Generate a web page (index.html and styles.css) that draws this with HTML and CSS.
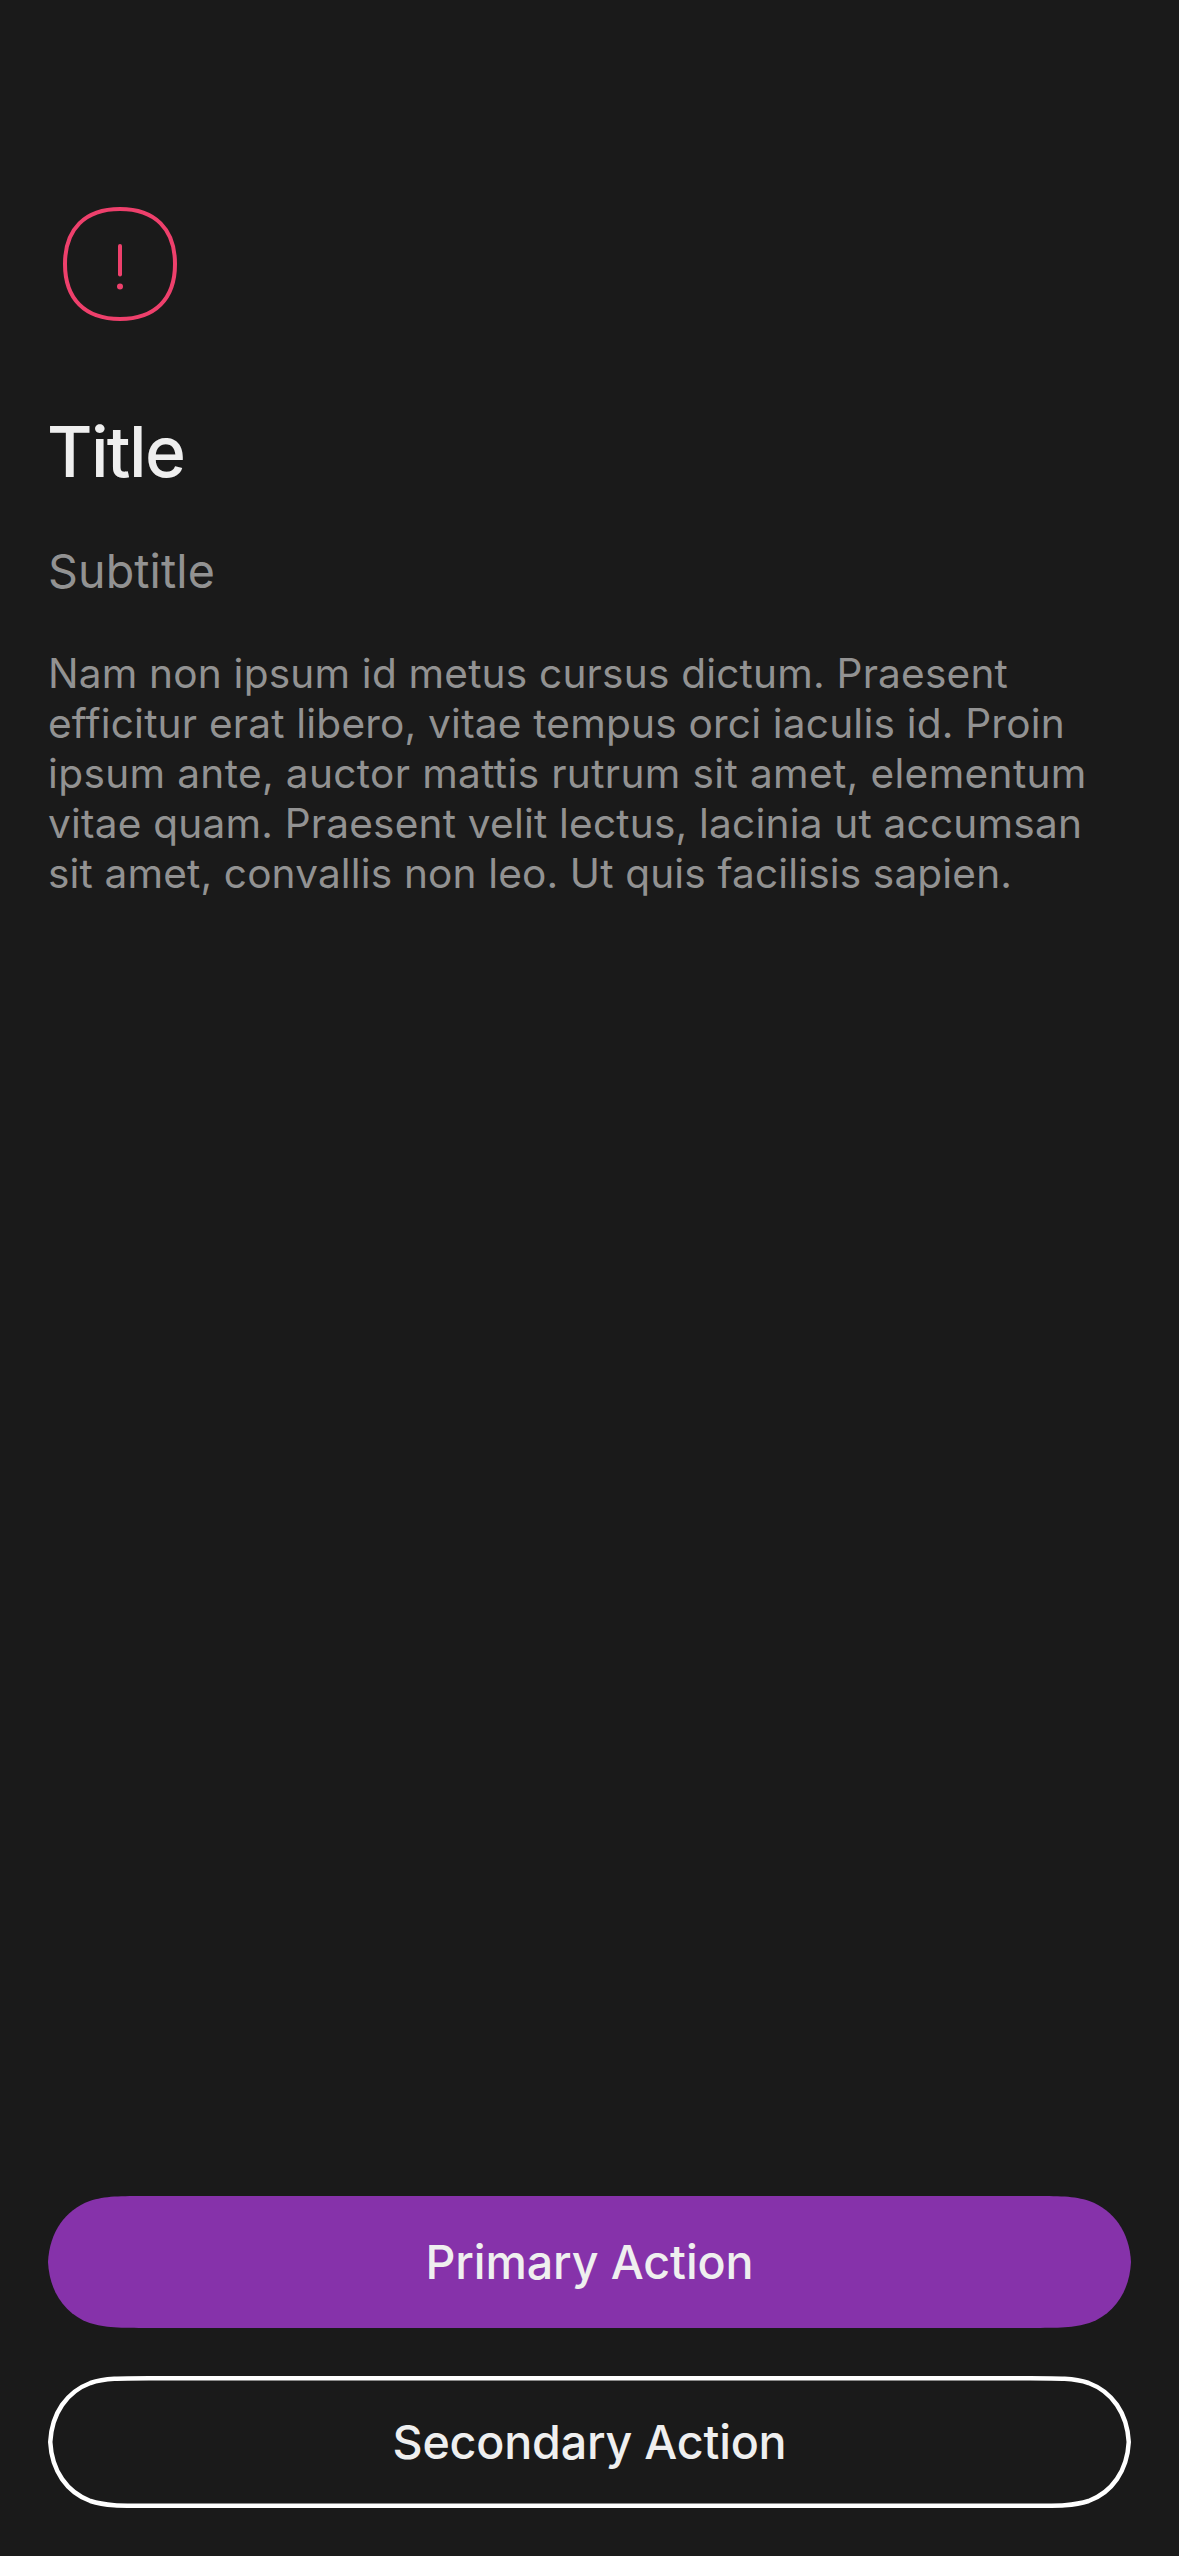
FILE: index.html
```html
<!DOCTYPE html>
<html lang="en">
<head>
<meta charset="utf-8">
<meta name="viewport" content="width=device-width">
<title>Title</title>
<link rel="stylesheet" href="styles.css">
</head>
<body>
<main class="screen">
  <section class="content">
    <svg class="icon" viewBox="0 0 144 144" aria-hidden="true">
      <path class="icon-line" d="M72 17C107 17 127 37 127 72C127 107 107 127 72 127C37 127 17 107 17 72C17 37 37 17 72 17Z"/>
      <path class="icon-line" d="M72 54V82.5"/>
      <circle class="icon-dot" cx="72" cy="94.5" r="3"/>
    </svg>
    <h1 class="title">Title</h1>
    <h2 class="subtitle">Subtitle</h2>
    <p class="text">
      <span>Nam non ipsum id metus cursus dictum. Praesent</span>
      <span>efficitur erat libero, vitae tempus orci iaculis id. Proin</span>
      <span class="loose">ipsum ante, auctor mattis rutrum sit amet, elementum</span>
      <span>vitae quam. Praesent velit lectus, lacinia ut accumsan</span>
      <span class="tight">sit amet, convallis non leo. Ut quis facilisis sapien.</span>
    </p>
  </section>
  <footer class="actions">
    <button class="button" type="button">
      <svg class="shape primary" viewBox="0 0 1083 132" aria-hidden="true"><path d="M100.9 0H982.1C1011 0 1026 0 1041.3 4.9C1066 14 1081.5 36 1083 66C1081.5 96 1066 118 1041.3 127.1C1026 132 1011 132 982.1 132H100.9C72 132 57 132 41.7 127.1C17 118 1.5 96 0 66C1.5 36 17 14 41.7 4.9C57 0 72 0 100.9 0Z"/></svg>
      <span class="label">Primary Action</span>
    </button>
    <button class="button" type="button">
      <svg class="shape secondary" viewBox="0 0 1083 132" aria-hidden="true"><path d="M100.9 2.25H982.1C1011 2.25 1026 2.25 1040.6 7C1064 15.7 1079.25 37 1080.75 66C1079.25 95 1064 116.3 1040.6 125C1026 129.75 1011 129.75 982.1 129.75H100.9C72 129.75 57 129.75 42.4 125C19 116.3 3.75 95 2.25 66C3.75 37 19 15.7 42.4 7C57 2.25 72 2.25 100.9 2.25Z"/></svg>
      <span class="label label-secondary">Secondary Action</span>
    </button>
  </footer>
</main>
</body>
</html>
```

FILE: styles.css
```css
* {
  box-sizing: border-box;
}

body {
  margin: 0;
  background: #1a1a1a;
  font-family: Inter, "Liberation Sans", sans-serif;
}

.screen {
  display: flex;
  flex-direction: column;
  justify-content: space-between;
  width: 1179px;
  height: 2556px;
  padding: 192px 48px 48px;
}

.content {
  display: flex;
  flex-direction: column;
  align-items: flex-start;
}

.icon {
  width: 144px;
  height: 144px;
}

.icon-line {
  fill: none;
  stroke: #ee406c;
  stroke-width: 4;
  stroke-linecap: round;
}

.icon-dot {
  fill: #ee406c;
}

.title,
.subtitle,
.text {
  margin: 0;
  white-space: nowrap;
}

.title {
  margin-top: 72px;
  margin-left: -1px;
  color: #efefef;
  font-size: 69.7px;
  font-weight: 500;
  letter-spacing: -1.6px;
  line-height: 88px;
}

.subtitle {
  margin-top: 46px;
  color: #929292;
  font-size: 46.6px;
  font-weight: 400;
  letter-spacing: 0.1px;
  line-height: 58px;
}

.text {
  display: flex;
  flex-direction: column;
  margin-top: 49px;
  color: #929292;
  font-size: 40.6px;
  letter-spacing: 0.2px;
  line-height: 50px;
}

.loose {
  letter-spacing: 0.36px;
}

.tight {
  letter-spacing: 0.15px;
}

.actions {
  display: flex;
  flex-direction: column;
  gap: 48px;
}

.button {
  display: grid;
  place-items: center;
  width: 100%;
  height: 132px;
  padding: 0;
  border: 0;
  background: none;
  color: #efefef;
  font: 500 46.6px/58px Inter, "Liberation Sans", sans-serif;
}

.shape,
.label {
  grid-area: 1 / 1;
}

.shape {
  width: 1083px;
  height: 132px;
}

.primary {
  fill: #8632aa;
}

.secondary {
  fill: none;
  stroke: #fff;
  stroke-width: 4.5;
}

.label {
  z-index: 1;
  letter-spacing: -0.1px;
}

.label-secondary {
  letter-spacing: -0.2px;
}
```
